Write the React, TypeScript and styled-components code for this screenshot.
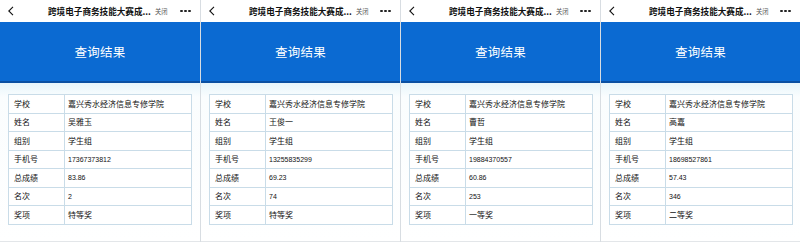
import styled, { createGlobalStyle } from "styled-components";

const GlobalStyle = createGlobalStyle`
  html, body {
    margin: 0;
    padding: 0;
    background: #ffffff;
  }
  body {
    font-family: "Noto Sans CJK SC", "Noto Sans", sans-serif;
  }
`;

type Result = {
  name: string;
  phone: string;
  score: string;
  rank: string;
  prize: string;
};

const results: Result[] = [
  { name: "吴雅玉", phone: "17367373812", score: "83.86", rank: "2", prize: "特等奖" },
  { name: "王俊一", phone: "13255835299", score: "69.23", rank: "74", prize: "特等奖" },
  { name: "曹哲", phone: "19884370557", score: "60.86", rank: "253", prize: "一等奖" },
  { name: "高嘉", phone: "18698527861", score: "57.43", rank: "346", prize: "二等奖" },
];

const Page = styled.div`
  display: flex;
  width: 800px;
  height: 242px;
  overflow: hidden;
`;

const Phone = styled.div`
  width: 200px;
  flex-shrink: 0;
  display: flex;
  flex-direction: column;
  border-left: 1px solid #d8dde2;
  box-sizing: border-box;

  &:first-child {
    border-left: none;
  }
`;

const TopBar = styled.div`
  height: 22px;
  display: flex;
  align-items: center;
  padding: 0 9px 0 7px;
  background: #ffffff;
  color: #111;
`;

const Back = styled.svg`
  width: 8px;
  height: 10px;
  flex-shrink: 0;
`;

const Title = styled.div`
  margin-left: 33px;
  font-size: 8.6px;
  font-weight: 700;
  white-space: nowrap;
`;

const Close = styled.span`
  margin-left: 4px;
  font-size: 6.3px;
  color: #555;
`;

const Dots = styled.div`
  margin-left: auto;
  display: flex;
  gap: 1.6px;

  span {
    width: 2.6px;
    height: 2.6px;
    border-radius: 50%;
    background: #222;
  }
`;

const Banner = styled.div`
  height: 59px;
  background: #0b6ad2;
  border-bottom: 2px solid #0a4fa2;
  display: flex;
  align-items: center;
  justify-content: center;
  color: #ffffff;
  font-size: 12.5px;
  letter-spacing: 0.3px;
`;

const Content = styled.div`
  flex: 1;
  background: linear-gradient(#e7f5fb 0, #fafdfe 14px, #ffffff 100%);
  border-bottom: 1px solid #e3e6e9;
  padding: 11px 8px 0;
`;

const Table = styled.table`
  width: 184px;
  border-collapse: collapse;
  background: #ffffff;
  table-layout: fixed;
`;

const Cell = styled.td<{ $label?: boolean; $num?: boolean }>`
  height: 17.5px;
  padding: 0 0 0 ${(p) => (p.$label ? "5px" : "3px")};
  border: 1px solid #c9dce8;
  width: ${(p) => (p.$label ? "50px" : "auto")};
  font-size: ${(p) => (p.$num ? "7px" : "8px")};
  color: #111;
  white-space: nowrap;
  line-height: 1;
  font-family: ${(p) =>
    p.$num ? '"Liberation Sans", "Noto Sans CJK SC", sans-serif' : '"Noto Sans CJK SC", sans-serif'};
`;

function ResultCard({ r }: { r: Result }) {
  const rows: [string, string, boolean][] = [
    ["学校", "嘉兴秀水经济信息专修学院", false],
    ["姓名", r.name, false],
    ["组别", "学生组", false],
    ["手机号", r.phone, true],
    ["总成绩", r.score, true],
    ["名次", r.rank, true],
    ["奖项", r.prize, false],
  ];
  return (
    <Phone>
      <TopBar>
        <Back viewBox="0 0 8 10">
          <path d="M6 0.8 L1.8 5 L6 9.2" fill="none" stroke="#111" strokeWidth="1.1" />
        </Back>
        <Title>跨境电子商务技能大赛成...</Title>
        <Close>关闭</Close>
        <Dots>
          <span />
          <span />
          <span />
        </Dots>
      </TopBar>
      <Banner>查询结果</Banner>
      <Content>
        <Table>
          <tbody>
            {rows.map(([k, v, num]) => (
              <tr key={k}>
                <Cell $label>{k}</Cell>
                <Cell $num={num}>{v}</Cell>
              </tr>
            ))}
          </tbody>
        </Table>
      </Content>
    </Phone>
  );
}

export default function App() {
  return (
    <>
      <GlobalStyle />
      <Page>
        {results.map((r) => (
          <ResultCard key={r.phone} r={r} />
        ))}
      </Page>
    </>
  );
}
